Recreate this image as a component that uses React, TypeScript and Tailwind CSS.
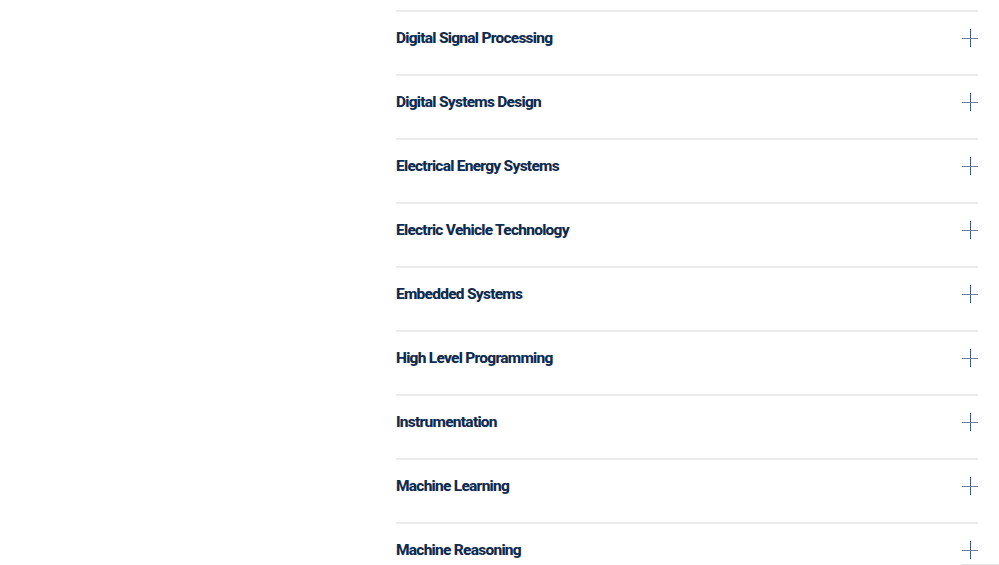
import React from "react";

const items = [
  "Digital Signal Processing",
  "Digital Systems Design",
  "Electrical Energy Systems",
  "Electric Vehicle Technology",
  "Embedded Systems",
  "High Level Programming",
  "Instrumentation",
  "Machine Learning",
  "Machine Reasoning",
];

function Plus() {
  return (
    <svg width="16" height="18" viewBox="0 0 16 18" className="shrink-0">
      <line x1="8.5" y1="0" x2="8.5" y2="18" stroke="#3d5b86" strokeWidth="1" />
      <line x1="0" y1="9.5" x2="16" y2="9.5" stroke="#6a7f9f" strokeWidth="1" />
    </svg>
  );
}

export default function App() {
  return (
    <div className="relative w-[999px] h-[565px] overflow-hidden bg-white">
      <div className="pt-[10px] pl-[396px] pr-[21px]">
        {items.map((t) => (
          <div key={t} className="border-t-2 border-[#eaecec] pb-[10px]">
            <div className="flex h-[52px] items-center justify-between">
              <span
                className="pt-[1px] text-[15.5px] font-extrabold text-[#0f2b4f] tracking-[-0.75px]"
                style={{ fontFamily: "Roboto, 'Noto Sans', sans-serif" }}
              >
                {t}
              </span>
              <Plus />
            </div>
          </div>
        ))}
      </div>
      <div className="absolute bottom-0 right-0 h-[1px] w-[38px] bg-[#e6e6e6]" />
    </div>
  );
}
